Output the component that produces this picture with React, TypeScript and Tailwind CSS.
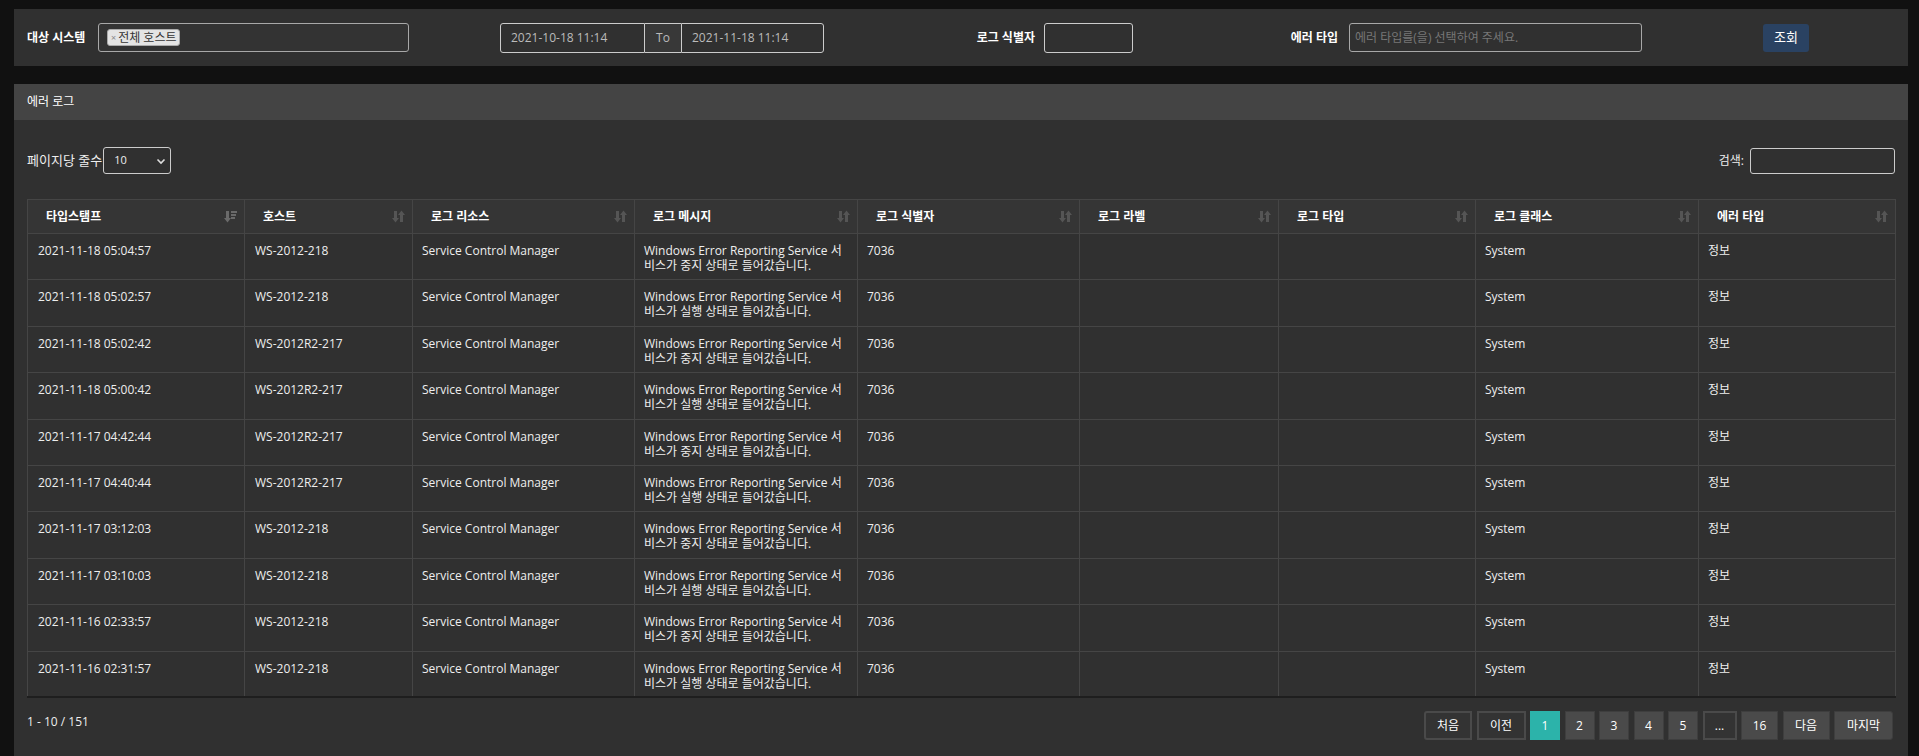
import React from "react";

const rows = [
  ["2021-11-18 05:04:57", "WS-2012-218", "중지"],
  ["2021-11-18 05:02:57", "WS-2012-218", "실행"],
  ["2021-11-18 05:02:42", "WS-2012R2-217", "중지"],
  ["2021-11-18 05:00:42", "WS-2012R2-217", "실행"],
  ["2021-11-17 04:42:44", "WS-2012R2-217", "중지"],
  ["2021-11-17 04:40:44", "WS-2012R2-217", "실행"],
  ["2021-11-17 03:12:03", "WS-2012-218", "중지"],
  ["2021-11-17 03:10:03", "WS-2012-218", "실행"],
  ["2021-11-16 02:33:57", "WS-2012-218", "중지"],
  ["2021-11-16 02:31:57", "WS-2012-218", "실행"],
];

const cols = [
  { title: "타입스탬프", w: "w-[217px]" },
  { title: "호스트", w: "w-[168px]" },
  { title: "로그 리소스", w: "w-[222px]" },
  { title: "로그 메시지", w: "w-[223px]" },
  { title: "로그 식별자", w: "w-[222px]" },
  { title: "로그 라벨", w: "w-[199px]" },
  { title: "로그 타입", w: "w-[197px]" },
  { title: "로그 클래스", w: "w-[223px]" },
  { title: "에러 타입", w: "w-[197px]" },
];

function SortIcon({ active }: { active?: boolean }) {
  return (
    <svg width="13" height="13" viewBox="0 0 13 13" className="shrink-0">
      {active ? (
        <g fill="#6a6a6a">
          <path d="M2 1h3v7h2l-3.5 4.5L0 8h2z" />
          <path d="M7 1h6v2H7zM7 4h5v2H7zM7 7h4v2H7z" />
        </g>
      ) : (
        <g fill="#555">
          <path d="M2 1h3v7h2l-3.5 4.5L0 8h2z" />
          <path d="M8 12h3V5h2L9.5 0.5 6 5h2z" />
        </g>
      )}
    </svg>
  );
}

export default function App() {
  const font = "font-['Open_Sans','Noto_Sans_CJK_KR',sans-serif]";
  return (
    <div className={`min-h-[756px] bg-[#111111] pt-[9px] pl-[14px] pr-[11px] text-[12px] text-[#eeeeee] ${font}`}>
      {/* filter bar */}
      <div className="flex h-[57px] items-center bg-[#303030] pl-[13px]">
        <div className="w-[71px] font-bold text-[12px] text-white">대상 시스템</div>
        <div className="flex h-[29px] w-[311px] items-center rounded-[3px] border border-[#a8a8a8] bg-[#333333] px-[8px]">
          <span className="flex h-[17px] items-center rounded-[3px] border border-[#aaaaaa] bg-[#e4e4e4] px-[3px] text-[12px] text-[#333]">
            <span className="mr-[2px] text-[9px] text-[#888]">×</span>전체 호스트
          </span>
        </div>
        <div className="ml-[91px] flex h-[30px] text-[12px] text-[#bbbbbb]">
          <div className="flex w-[145px] items-center rounded-l-[3px] border border-[#cccccc] pl-[10px]">2021-10-18 11:14</div>
          <div className="flex w-[36px] items-center justify-center border-y border-[#cccccc] bg-[#383838]">To</div>
          <div className="flex w-[143px] items-center rounded-r-[3px] border border-[#cccccc] pl-[10px]">2021-11-18 11:14</div>
        </div>
        <div className="flex w-[211px] justify-end font-bold text-white">로그 식별자</div>
        <div className="ml-[9px] h-[30px] w-[89px] rounded-[3px] border border-[#cccccc]" />
        <div className="flex w-[205px] justify-end font-bold text-white">에러 타입</div>
        <div className="ml-[11px] flex h-[29px] w-[293px] items-center rounded-[3px] border border-[#a8a8a8] pl-[5px] text-[12px] text-[#777777]">
          에러 타입를(을) 선택하여 주세요.
        </div>
        <button className="ml-[121px] h-[28px] w-[46px] rounded-[3px] bg-[#2a4262] text-[13px] text-white">조회</button>
      </div>

      {/* error log panel */}
      <div className="mt-[18px] bg-[#303030]">
        <div className="flex h-[36px] items-center bg-[#444444] pl-[13px] text-[12px] text-white">에러 로그</div>
        <div className="px-[13px] pt-[27px]">
          <div className="flex h-[27px] items-center justify-between">
            <div className="flex items-center">
              <span className="text-[13px]">페이지당 줄수</span>
              <div className="ml-[1px] flex h-[27px] w-[68px] items-center justify-between rounded-[3px] border border-[#cccccc] pl-[10px] pr-[4px] text-[11px]">
                <span>10</span>
                <svg width="10" height="10" viewBox="0 0 10 10">
                  <path d="M1.5 3.5 5 7l3.5-3.5" stroke="#dddddd" strokeWidth="1.6" fill="none" />
                </svg>
              </div>
            </div>
            <div className="flex items-center">
              <span className="mr-[6px]">검색:</span>
              <div className="h-[26px] w-[145px] rounded-[3px] border border-[#cccccc]" />
            </div>
          </div>

          <table className="mt-[25px] w-[1868px] table-fixed border-collapse border-b-2 border-b-[#1e1e1e]">
            <colgroup>
              {cols.map((c) => (
                <col key={c.title} className={c.w} />
              ))}
            </colgroup>
            <thead>
              <tr className="h-[34px] bg-[#353535]">
                {cols.map((c, i) => (
                  <th key={c.title} className="border border-[#454545] pl-[18px] pr-[7px] text-left font-bold text-white">
                    <div className="flex items-center justify-between">
                      <span>{c.title}</span>
                      <SortIcon active={i === 0} />
                    </div>
                  </th>
                ))}
              </tr>
            </thead>
            <tbody>
              {rows.map(([ts, host, state]) => (
                <tr key={ts} className="h-[46.4px] align-top">
                  <td className="border border-[#454545] px-[10px] pt-[9px] leading-[15px]">{ts}</td>
                  <td className="border border-[#454545] px-[10px] pt-[9px] leading-[15px]">{host}</td>
                  <td className="border border-[#454545] px-[9px] pt-[9px] leading-[15px]">Service Control Manager</td>
                  <td className="border border-[#454545] px-[9px] pt-[9px] leading-[15px]">
                    Windows Error Reporting Service 서<br />비스가 {state} 상태로 들어갔습니다.
                  </td>
                  <td className="border border-[#454545] px-[9px] pt-[9px] leading-[15px]">7036</td>
                  <td className="border border-[#454545]" />
                  <td className="border border-[#454545]" />
                  <td className="border border-[#454545] px-[9px] pt-[9px] leading-[15px]">System</td>
                  <td className="border border-[#454545] px-[9px] pt-[9px] leading-[15px]">정보</td>
                </tr>
              ))}
            </tbody>
          </table>

          <div className="mt-[13px] flex items-start justify-between pb-[17px]">
            <div className="pt-[2px] text-[12px]">1 - 10 / 151</div>
            <div className="mr-[2px] flex gap-[4.5px] text-[12px]">
              <button className="h-[29px] w-[48px] rounded-l-[3px] border-2 border-[#4a4a4a] bg-[#333333] text-white">처음</button>
              <button className="h-[29px] w-[49px] border-2 border-[#4a4a4a] bg-[#333333] text-white">이전</button>
              <button className="h-[29px] w-[30px] bg-[#2cb3aa] text-white">1</button>
              {["2", "3", "4", "5"].map((n) => (
                <button key={n} className="h-[29px] w-[30px] border border-[#3e3e3e] bg-[#4a4a4a] text-white">{n}</button>
              ))}
              <button className="h-[29px] w-[34px] border-2 border-[#4a4a4a] bg-[#333333] text-white">...</button>
              <button className="h-[29px] w-[37px] border border-[#3e3e3e] bg-[#4a4a4a] text-white">16</button>
              <button className="h-[29px] w-[47px] border border-[#3e3e3e] bg-[#4a4a4a] text-white">다음</button>
              <button className="h-[29px] w-[59px] rounded-r-[3px] border border-[#3e3e3e] bg-[#4a4a4a] text-white">마지막</button>
            </div>
          </div>
        </div>
      </div>
    </div>
  );
}
